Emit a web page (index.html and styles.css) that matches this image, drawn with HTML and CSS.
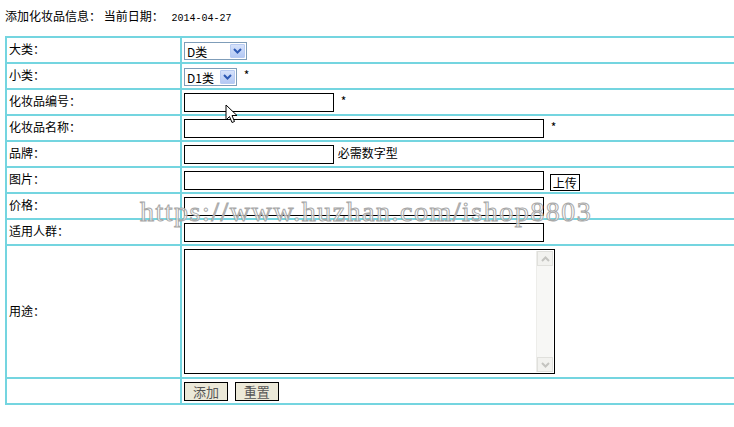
FILE: index.html
```html
<!DOCTYPE html>
<html lang="zh-CN">
<head>
<meta charset="UTF-8">
<title>添加化妆品信息</title>
<link rel="stylesheet" href="styles.css">
</head>
<body>
<p class="title">添加化妆品信息： 当前日期： <span class="date">2014-04-27</span></p>

<form class="wrap">
<table class="form">
    <tr>
        <td class="lab">大类：</td>
        <td class="val">
            <span class="sel sel-big">
                <select><option>D类</option></select>
                <i class="arr"><svg width="9" height="6" viewBox="0 0 9 6"><path d="M1 1 L4.5 4.5 L8 1" fill="none" stroke="#2d59b4" stroke-width="2"/></svg></i>
            </span>
        </td>
    </tr>
    <tr>
        <td class="lab">小类：</td>
        <td class="val">
            <span class="sel sel-small">
                <select><option>D1类</option></select>
                <i class="arr"><svg width="9" height="6" viewBox="0 0 9 6"><path d="M1 1 L4.5 4.5 L8 1" fill="none" stroke="#2d59b4" stroke-width="2"/></svg></i>
            </span>
            <span class="star">*</span>
        </td>
    </tr>
    <tr>
        <td class="lab">化妆品编号：</td>
        <td class="val"><input class="txt short" type="text"> <span class="star">*</span></td>
    </tr>
    <tr>
        <td class="lab">化妆品名称：</td>
        <td class="val"><input class="txt long" type="text"> <span class="star">*</span></td>
    </tr>
    <tr>
        <td class="lab">品牌：</td>
        <td class="val"><input class="txt short" type="text"> <span class="note">必需数字型</span></td>
    </tr>
    <tr>
        <td class="lab">图片：</td>
        <td class="val"><input class="txt long" type="text"> <button class="upload" type="button">上传</button></td>
    </tr>
    <tr>
        <td class="lab">价格：</td>
        <td class="val"><input class="txt long" type="text"></td>
    </tr>
    <tr>
        <td class="lab">适用人群：</td>
        <td class="val"><input class="txt long" type="text"></td>
    </tr>
    <tr class="big">
        <td class="lab">用途：</td>
        <td class="val">
            <span class="area">
                <textarea></textarea>
                <span class="bar">
                    <i class="btn"><svg width="9" height="6" viewBox="0 0 9 6"><path d="M1 5 L4.5 1.5 L8 5" fill="none" stroke="#c4c4c0" stroke-width="2"/></svg></i>
                    <i class="btn"><svg width="9" height="6" viewBox="0 0 9 6"><path d="M1 1 L4.5 4.5 L8 1" fill="none" stroke="#c4c4c0" stroke-width="2"/></svg></i>
                </span>
            </span>
        </td>
    </tr>
    <tr>
        <td class="lab"></td>
        <td class="val">
            <button class="act" type="submit">添加</button>
            <button class="act" type="reset">重置</button>
        </td>
    </tr>
</table>
</form>

<!-- 水印 -->
<div class="mark">https://www.huzhan.com/ishop8803</div>
<!-- 鼠标 -->
<svg class="cursor" width="13" height="20" viewBox="0 0 13 20"><path d="M1 1 L1 16 L4.5 12.5 L7 18.5 L9.5 17.5 L7 11.5 L12 11.5 Z" fill="#fff" stroke="#000" stroke-width="1"/></svg>
</body>
</html>
```

FILE: styles.css
```css
html,
body {
    overflow: hidden;
}
body {
    margin: 0;
    padding: 0 0 0 5px;
    background: #fff;
    font-family: "Noto Sans CJK SC", sans-serif;
    font-size: 12px;
    color: #000;
    position: relative;
}

.title {
    margin: 0;
    padding-top: 9px;
    height: 36px;
    line-height: 14px;
    box-sizing: border-box;
}
.title .date {
    font-family: "Liberation Mono", monospace;
    font-size: 10px;
    margin-left: 5px;
}

.wrap {
    margin: 0;
}

/* 表格 */
.form {
    border-collapse: collapse;
    width: 1000px;
}
.form td {
    border: 2px solid #74d5e0;
    height: 24px;
    padding: 0;
    vertical-align: middle;
}
.form .lab {
    width: 171px;
    height: 21px;
    padding: 0 0 3px 2px;
}
.form .val {
    padding-left: 2px;
}
.form .big td {
    height: 131px;
}
.form .big .lab {
    height: 128px;
}

/* select */
.sel {
    position: relative;
    display: inline-block;
    vertical-align: middle;
    height: 18px;
}
.sel select {
    appearance: none;
    -webkit-appearance: none;
    height: 18px;
    border: 1px solid #7f9db9;
    border-radius: 0;
    background: #fff;
    font-family: "Noto Sans CJK SC", sans-serif;
    font-size: 12px;
    padding: 0 0 0 2px;
    margin: 0;
    color: #000;
    box-sizing: border-box;
}
.sel-big select {
    width: 63px;
}
.sel-small select {
    width: 53px;
}
.sel .arr {
    position: absolute;
    top: 2px;
    right: 2px;
    width: 15px;
    height: 14px;
    background: linear-gradient(#d6e2fb, #b3c8f4);
    border: 1px solid #b8cbf2;
    box-sizing: border-box;
    border-radius: 1px;
    display: flex;
    align-items: center;
    justify-content: center;
}
.star {
    margin-left: 4px;
}
.note {
    margin-left: 1px;
}

/* input */
.txt {
    height: 19px;
    border: 1px solid #000;
    padding: 0;
    margin: 0;
    box-sizing: border-box;
    vertical-align: middle;
    background: #fff;
}
.txt.short {
    width: 150px;
}
.txt.long {
    width: 360px;
}

.upload {
    height: 17px;
    width: 30px;
    border: 1px solid #000;
    background: #fff;
    padding: 0;
    margin: 5px 0 0 3px;
    font-family: "Noto Sans CJK SC", sans-serif;
    font-size: 12px;
    line-height: 14px;
    vertical-align: middle;
}

/* textarea */
.area {
    position: relative;
    display: inline-block;
    vertical-align: middle;
}
.area textarea {
    display: block;
    width: 371px;
    height: 125px;
    border: 1px solid #000;
    resize: none;
    margin: 0;
    padding: 0;
    box-sizing: border-box;
    overflow: hidden;
}
.area .bar {
    position: absolute;
    top: 2px;
    right: 2px;
    bottom: 2px;
    width: 16px;
    background: #f7f7f5;
    border-left: 1px solid #ededea;
    display: flex;
    flex-direction: column;
    justify-content: space-between;
}
.area .btn {
    height: 15px;
    background: #f2f2ef;
    border: 1px solid #e0e0dc;
    box-sizing: border-box;
    display: flex;
    align-items: center;
    justify-content: center;
}

/* 按钮 */
.act {
    width: 44px;
    height: 19px;
    border: 1px solid #000;
    background: #ece9d8;
    color: #555;
    padding: 0;
    margin: 0 4px 0 0;
    font-family: "Noto Sans CJK SC", sans-serif;
    font-size: 13px;
    line-height: 16px;
    vertical-align: middle;
}

/* 水印 */
.mark {
    position: absolute;
    left: 140px;
    top: 196px;
    font-family: "Liberation Serif", serif;
    font-size: 28px;
    letter-spacing: 1.5px;
    color: rgba(255, 255, 255, 0.7);
    -webkit-text-stroke: 1px #a8a8a8;
    white-space: nowrap;
    pointer-events: none;
}
.cursor {
    position: absolute;
    left: 225px;
    top: 104px;
}
```
